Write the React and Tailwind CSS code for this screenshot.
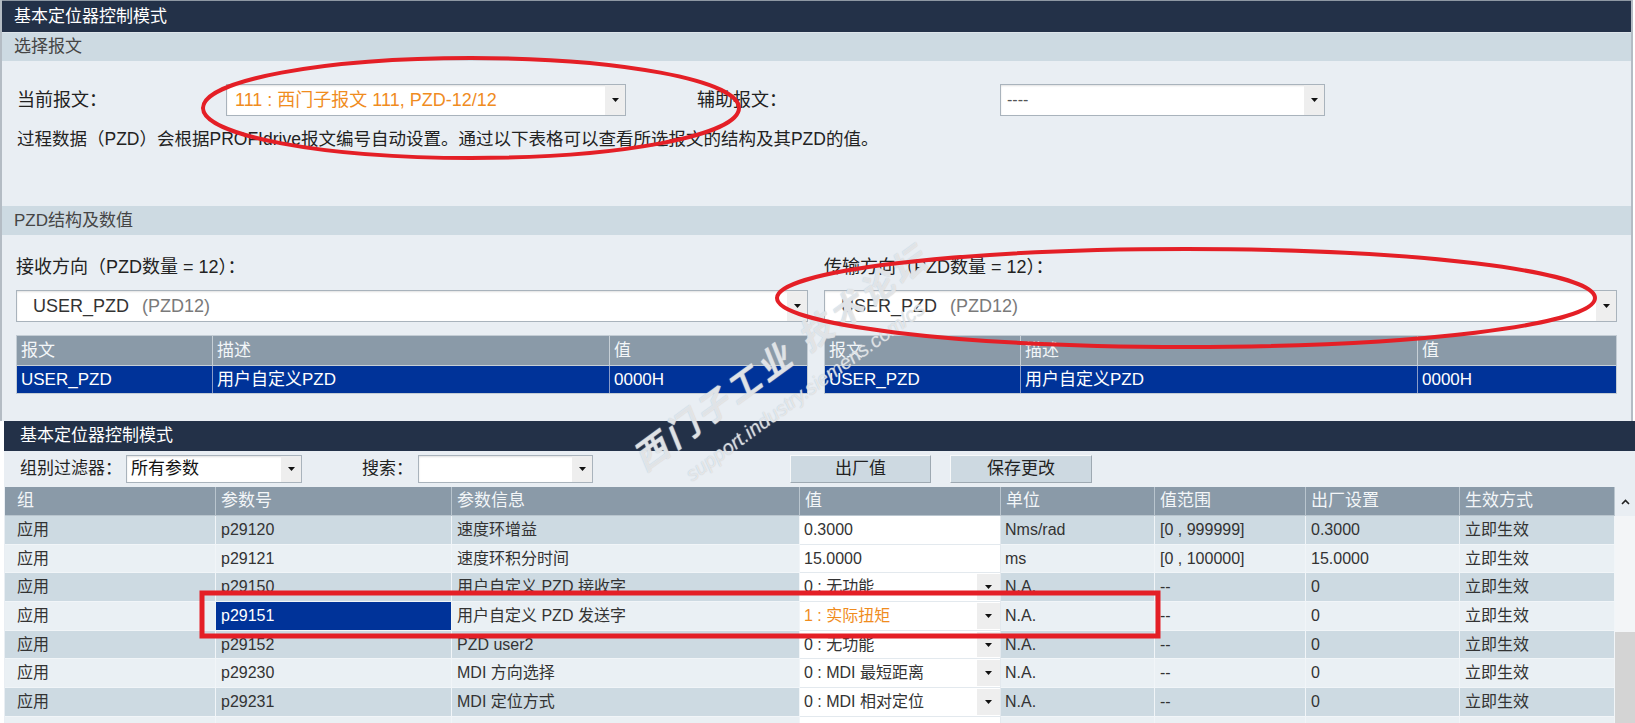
import React from 'react';

const rows = [
    { p: 'p29120', info: '速度环增益', val: '0.3000', unit: 'Nms/rad', range: '[0 , 999999]', fac: '0.3000' },
    { p: 'p29121', info: '速度环积分时间', val: '15.0000', unit: 'ms', range: '[0 , 100000]', fac: '15.0000' },
    { p: 'p29150', info: '用户自定义 PZD 接收字', val: '0 : 无功能', dd: true, unit: 'N.A.', range: '--', fac: '0' },
    { p: 'p29151', info: '用户自定义 PZD 发送字', val: '1 : 实际扭矩', dd: true, unit: 'N.A.', range: '--', fac: '0', selected: true },
    { p: 'p29152', info: 'PZD user2', val: '0 : 无功能', dd: true, unit: 'N.A.', range: '--', fac: '0' },
    { p: 'p29230', info: 'MDI 方向选择', val: '0 : MDI 最短距离', dd: true, unit: 'N.A.', range: '--', fac: '0' },
    { p: 'p29231', info: 'MDI 定位方式', val: '0 : MDI 相对定位', dd: true, unit: 'N.A.', range: '--', fac: '0' },
];

const Arrow = () => (
    <svg width="7" height="4" viewBox="0 0 7 4">
        <polygon points="0,0 7,0 3.5,4" fill="#111" />
    </svg>
);

const DropBox = ({ className, children }) => (
    <div className={`flex items-stretch bg-white border border-[#a9b3bc] shadow-[inset_0_1px_2px_rgba(0,0,0,0.12)] ${className}`}>
        <div className="flex-1 flex items-center overflow-hidden whitespace-nowrap">{children}</div>
        <div className="w-[20px] bg-[#eeeeee] flex items-center justify-center">
            <Arrow />
        </div>
    </div>
);

const SectionHeader = ({ children, className }) => (
    <div className={`bg-[#cddae2] flex items-center pl-[12px] text-[17px] text-[#454545] ${className}`}>{children}</div>
);

const PzdTable = () => (
    <div className="border border-[#c3ccd4]">
        <div className="grid grid-cols-[196px_397px_1fr] h-[29px] bg-[#8a9aa8] text-[#f3f6f8] text-[17px]">
            <div className="pl-[4px] flex items-center border-r border-[#c6cfd6]">报文</div>
            <div className="pl-[4px] flex items-center border-r border-[#c6cfd6]">描述</div>
            <div className="pl-[4px] flex items-center">值</div>
        </div>
        <div className="grid grid-cols-[196px_397px_1fr] h-[28px] bg-[#003399] text-white text-[17px] border-t border-[#c6cfd6]">
            <div className="pl-[4px] flex items-center border-r border-[#8a9cc8]">USER_PZD</div>
            <div className="pl-[4px] flex items-center border-r border-[#8a9cc8]">用户自定义PZD</div>
            <div className="pl-[4px] flex items-center">0000H</div>
        </div>
    </div>
);

const Direction = ({ label, className }) => (
    <div className={`flex flex-col ${className}`}>
        <div className="mt-[22px] h-[20px] leading-[20px] text-[18px] text-[#222]">{label}</div>
        <DropBox className="mt-[13px] h-[32px]">
            <span className="pl-[16px] text-[18px] text-[#333]">USER_PZD</span>
            <span className="pl-[13px] text-[18px] text-[#7a7a7a]">(PZD12)</span>
        </DropBox>
        <div className="mt-[13px]">
            <PzdTable />
        </div>
    </div>
);

const Button = ({ className, children }) => (
    <div className={`h-[28px] flex items-center justify-center bg-[#cdd9e1] border border-t-[#f7f9fa] border-l-[#f7f9fa] border-b-[#9ea9b2] border-r-[#9ea9b2] text-[17px] text-[#222] ${className}`}>
        {children}
    </div>
);

const cols = ['组', '参数号', '参数信息', '值', '单位', '值范围', '出厂设置', '生效方式'];

const App = () => {
    return (
        <div className="relative w-[1635px] h-[723px] overflow-hidden bg-white font-['Liberation_Sans','Noto_Sans_CJK_SC',sans-serif]">
            {/* panel 1 */}
            <div className="w-[1633px] h-[421px] border-x-2 border-[#b4bcc4] bg-[#e9eef3] flex flex-col">
                <div className="h-[32px] shrink-0 bg-[#233148] border-t border-[#8e98a3] flex items-center pl-[12px] text-white text-[17px]">
                    基本定位器控制模式
                </div>
                <div className="h-[1px] shrink-0 bg-[#dde4ea]" />
                <SectionHeader className="h-[28px] shrink-0">选择报文</SectionHeader>
                <div className="h-[144px] shrink-0 flex flex-col pl-[15px] text-[18px] text-[#222]">
                    <div className="mt-[23px] flex items-center h-[32px]">
                        <div className="w-[209px]">当前报文：</div>
                        <DropBox className="w-[400px] h-[32px]">
                            <span className="pl-[8px] text-[#f08c1e]">111 : 西门子报文 111, PZD-12/12</span>
                        </DropBox>
                        <div className="ml-[71px] w-[303px]">辅助报文：</div>
                        <DropBox className="w-[325px] h-[32px]">
                            <span className="pl-[6px] text-[16px] text-[#555]">----</span>
                        </DropBox>
                    </div>
                    <div className="mt-[13px] leading-[20px] text-[17.5px]">
                        过程数据（PZD）会根据PROFIdrive报文编号自动设置。通过以下表格可以查看所选报文的结构及其PZD的值。
                    </div>
                </div>
                <div className="h-[1px] shrink-0" />
                <SectionHeader className="h-[29px] shrink-0">PZD结构及数值</SectionHeader>
                <div className="flex-1 flex gap-[16px] pl-[14px]">
                    <Direction label="接收方向（PZD数量 = 12）：" className="w-[792px]" />
                    <Direction label="传输方向（PZD数量 = 12）：" className="w-[793px]" />
                </div>
            </div>

            {/* panel 2 */}
            <div className="ml-[4px] w-[1631px] bg-[#e9eef3] flex flex-col">
                <div className="h-[30px] bg-[#233148] flex items-center pl-[16px] text-white text-[17px]">
                    基本定位器控制模式
                </div>
                <div className="h-[36px] flex items-center pl-[16px] text-[17px] text-[#222]">
                    <div className="w-[106px]">组别过滤器：</div>
                    <DropBox className="w-[176px] h-[28px]">
                        <span className="pl-[4px] text-[#111]">所有参数</span>
                    </DropBox>
                    <div className="ml-[60px] w-[56px]">搜索：</div>
                    <DropBox className="w-[175px] h-[28px]" />
                    <Button className="ml-[197px] w-[141px]">出厂值</Button>
                    <Button className="ml-[19px] w-[142px]">保存更改</Button>
                </div>
                <div className="flex">
                    <div className="ml-[1px] w-[1610px] text-[16px] text-[#333]">
                        <div className="grid grid-cols-[211px_236px_348px_201px_154px_151px_154px_155px] h-[29px] bg-[#8a9aa8] text-[17px] text-[#f3f6f8]">
                            {cols.map((c, i) => (
                                <div key={c} className={`flex items-center border-r border-b border-[#b9c5ce] ${i === 0 ? 'pl-[12px]' : 'pl-[5px]'}`}>{c}</div>
                            ))}
                        </div>
                        {[...rows, {}].map((r, i) => (
                            <div
                                key={i}
                                className={`grid grid-cols-[211px_236px_348px_201px_154px_151px_154px_155px] h-[28.7px] ${i % 2 === 0 ? 'bg-[#cddae2]' : 'bg-[#eaf0f4]'}`}
                            >
                                <div className="flex items-center pl-[12px] border-r border-b border-[#f1f5f8]">{r.p ? '应用' : ''}</div>
                                <div className={`flex items-center pl-[5px] border-r border-b border-[#f1f5f8] ${r.selected ? 'bg-[#003399] text-white' : ''}`}>{r.p}</div>
                                <div className="flex items-center pl-[5px] border-r border-b border-[#f1f5f8]">{r.info}</div>
                                <div className="flex items-stretch bg-white border-r border-b border-[#e3e9ee]">
                                    <div className={`flex-1 flex items-center pl-[4px] ${r.selected ? 'text-[#f08c1e]' : ''}`}>{r.val}</div>
                                    {r.dd && (
                                        <div className="w-[23px] my-[1px] bg-[#eeeeee] flex items-center justify-center">
                                            <Arrow />
                                        </div>
                                    )}
                                </div>
                                <div className="flex items-center pl-[4px] border-r border-b border-[#f1f5f8]">{r.unit}</div>
                                <div className="flex items-center pl-[5px] border-r border-b border-[#f1f5f8]">{r.range}</div>
                                <div className="flex items-center pl-[5px] border-r border-b border-[#f1f5f8]">{r.fac}</div>
                                <div className="flex items-center pl-[5px] border-r border-b border-[#f1f5f8]">{r.p ? '立即生效' : ''}</div>
                            </div>
                        ))}
                    </div>
                    {/* scrollbar */}
                    <div className="w-[20px] flex flex-col">
                        <div className="h-[29px] flex items-center justify-center">
                            <svg width="9" height="6" viewBox="0 0 9 6">
                                <polyline points="1,5 4.5,1.5 8,5" fill="none" stroke="#222" strokeWidth="1.6" />
                            </svg>
                        </div>
                        <div className="h-[116px] bg-[#f3f5f7]" />
                        <div className="h-[120px] bg-[#d4d4d4]" />
                    </div>
                </div>
            </div>

            {/* watermark */}
            <div className="absolute left-[560px] top-[330px] w-[460px] -rotate-[36deg] flex flex-col items-center pointer-events-none text-white/60 [text-shadow:0_0_1px_#b3bcc4]">
                <div className="text-[34px] italic font-bold tracking-[4px]">西门子工业 技术论坛</div>
                <div className="text-[20px] italic">support.industry.siemens.com/cs</div>
            </div>

            {/* red annotations */}
            <svg className="absolute left-0 top-0 pointer-events-none" width="1635" height="723">
                <ellipse cx="471" cy="108" rx="268" ry="50" fill="none" stroke="#e41f26" strokeWidth="4" />
                <ellipse cx="1186" cy="298" rx="409" ry="49" fill="none" stroke="#e41f26" strokeWidth="4" />
                <rect x="202" y="593" width="956" height="43" fill="none" stroke="#e41f26" strokeWidth="5" />
            </svg>
        </div>
    );
};

export default App;
